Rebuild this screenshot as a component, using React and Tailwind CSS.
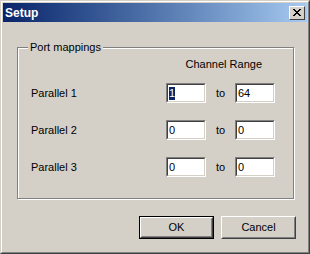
export default function App() {
  const rows = [
    { label: "Parallel 1", from: "1", to: "64", selected: true },
    { label: "Parallel 2", from: "0", to: "0" },
    { label: "Parallel 3", from: "0", to: "0" },
  ];

  return (
    <div
      className="w-[310px] h-[254px] bg-[#d4d0c8] border border-t-[#d4d0c8] border-l-[#d4d0c8] border-r-[#404040] border-b-[#404040] text-[11px] text-black"
      style={{ fontFamily: '"Liberation Sans", Arial, sans-serif' }}
    >
      <div className="h-full border border-t-white border-l-white border-r-[#808080] border-b-[#808080] p-px flex flex-col">
        {/* title bar */}
        <div className="h-[19px] flex items-center justify-between bg-gradient-to-r from-[#0a246a] to-[#a6caf0] pl-[2px] pr-[2px]">
          <span className="text-white font-bold text-[12px] leading-none">Setup</span>
          <div className="w-[16px] h-[14px] bg-[#d4d0c8] border border-t-white border-l-white border-r-[#404040] border-b-[#404040] flex items-center justify-center">
            <svg width="8" height="7" viewBox="0 0 8 7" shapeRendering="crispEdges">
              <path d="M0 0h2v1h-2zM6 0h2v1h-2zM1 1h2v1h-2zM5 1h2v1h-2zM2 2h4v1h-4zM3 3h2v1h-2zM2 4h4v1h-4zM1 5h2v1h-2zM5 5h2v1h-2zM0 6h2v1h-2zM6 6h2v1h-2z" fill="#000" />
            </svg>
          </div>
        </div>

        {/* group box */}
        <div className="relative mt-[25px] ml-[14px] w-[277px] h-[152px] border border-[#808080] shadow-[1px_1px_0_#fff,inset_1px_1px_0_#fff]">
          <span className="absolute left-[10px] top-[-8px] bg-[#d4d0c8] px-[2px] leading-[14px]">Port mappings</span>
          <div className="flex flex-col pt-[9px] pl-[13px]">
            <div className="flex justify-end pr-[31px] leading-[14px] h-[14px]">Channel Range</div>
            <div className="flex flex-col gap-[17px] mt-[12px]">
              {rows.map((r) => (
                <div key={r.label} className="flex items-center h-[20px]">
                  <span className="w-[135px]">{r.label}</span>
                  <Field value={r.from} selected={r.selected} />
                  <span className="w-[29px] text-center">to</span>
                  <Field value={r.to} />
                </div>
              ))}
            </div>
          </div>
        </div>

        {/* buttons */}
        <div className="flex justify-end gap-[7px] mt-[17px] pr-[11px]">
          <button className="w-[75px] h-[23px] border border-black bg-[#d4d0c8] p-0">
            <div className="h-full border border-t-white border-l-white border-r-[#404040] border-b-[#404040]">
              <div className="h-full border border-transparent border-r-[#808080] border-b-[#808080] flex items-center justify-center">OK</div>
            </div>
          </button>
          <button className="w-[75px] h-[23px] bg-[#d4d0c8] p-0 border border-t-white border-l-white border-r-[#404040] border-b-[#404040]">
            <div className="h-full border border-transparent border-r-[#808080] border-b-[#808080] flex items-center justify-center">Cancel</div>
          </button>
        </div>
      </div>
    </div>
  );
}

function Field({ value, selected }) {
  return (
    <div className="w-[40px] h-[20px] border border-t-[#808080] border-l-[#808080] border-r-white border-b-white">
      <div className="h-full bg-white border border-t-[#404040] border-l-[#404040] border-r-[#d4d0c8] border-b-[#d4d0c8] flex items-center pl-[1px]">
        <span className={selected ? "bg-[#0a246a] text-white leading-[13px]" : "leading-[13px]"}>{value}</span>
      </div>
    </div>
  );
}
